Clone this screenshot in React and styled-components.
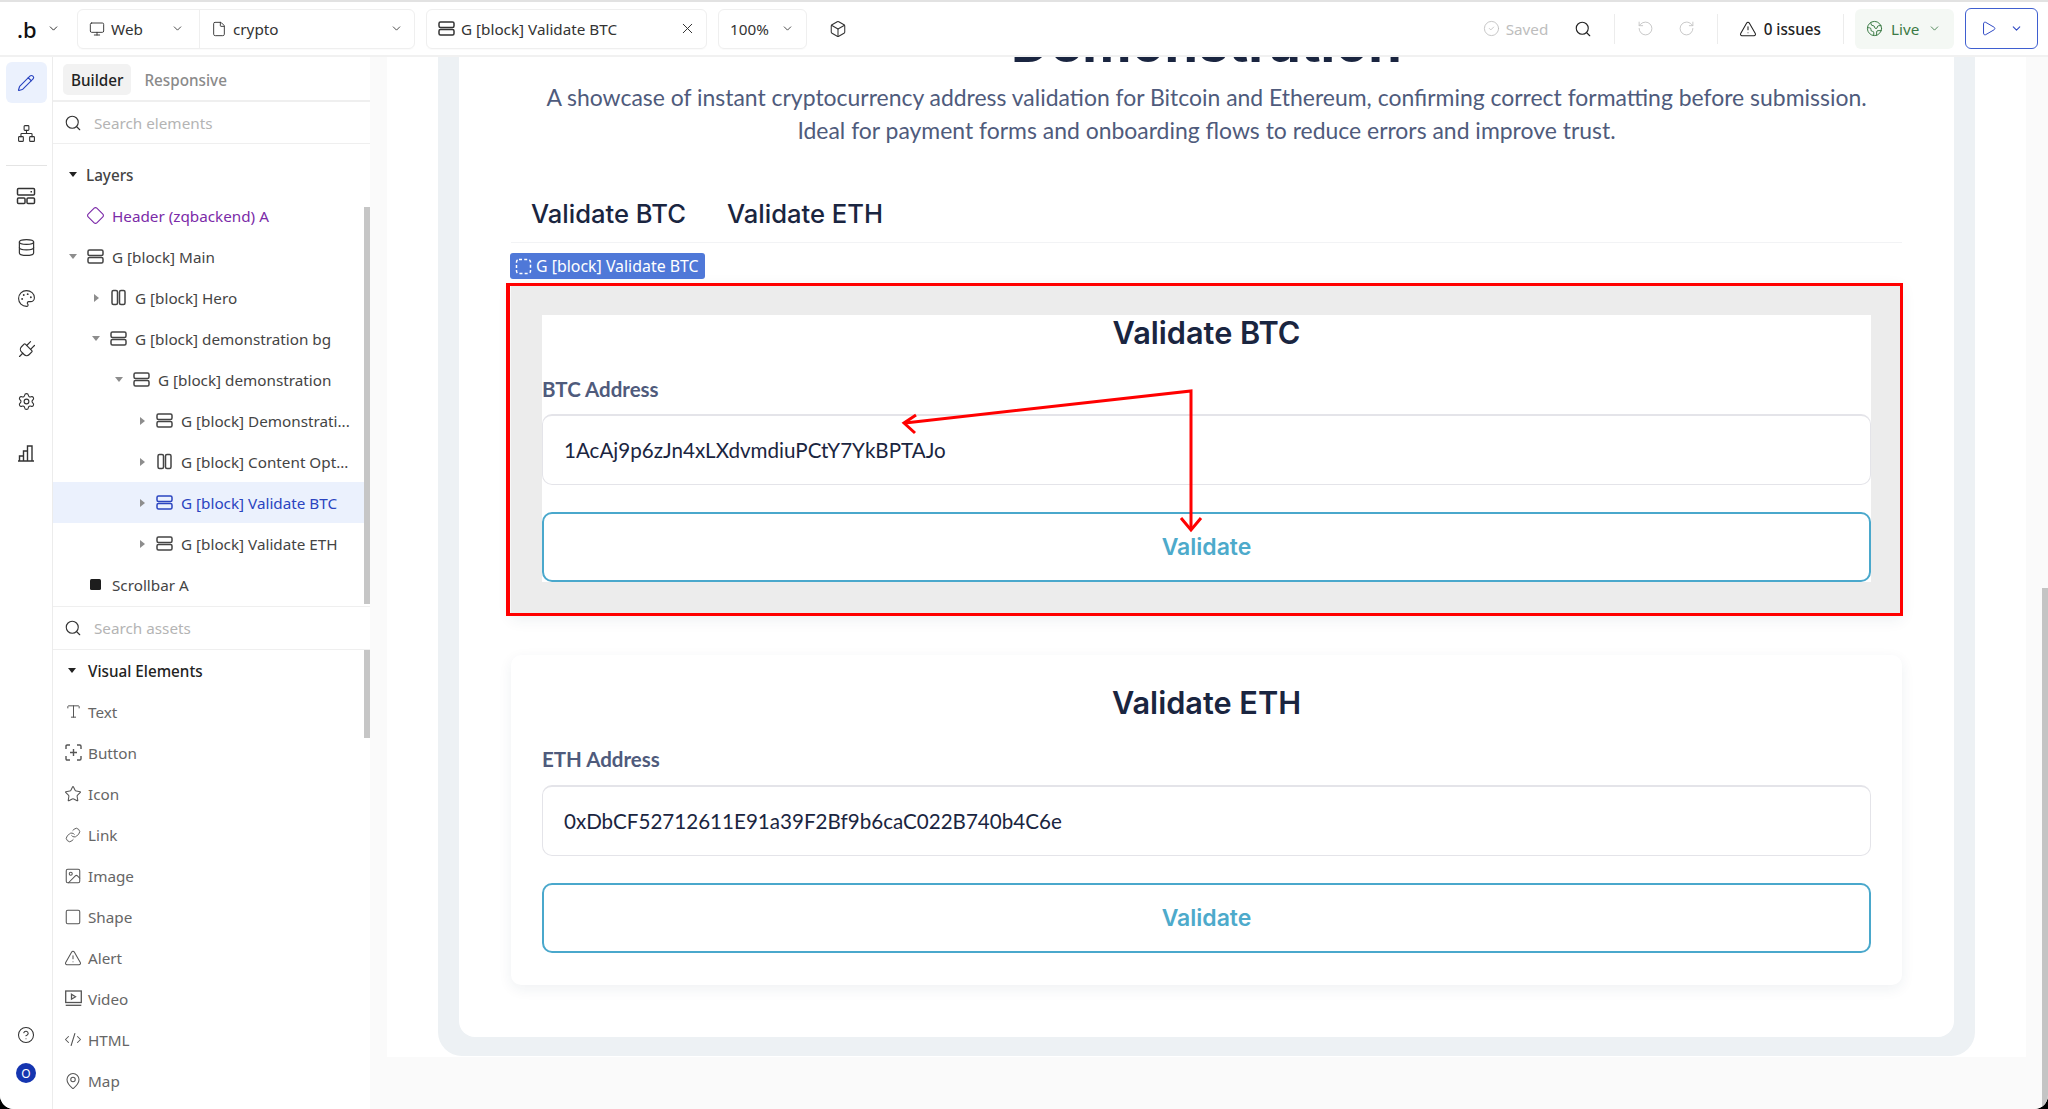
import React from "react";
import styled, { createGlobalStyle } from "styled-components";
import {
  Pencil, Network, Database, Palette, Plug, Settings, CircleHelp, Search, Monitor, File, X, Box,
  CircleCheck, RotateCcw, RotateCw, TriangleAlert, Earth, Play, ChevronDown, Diamond, Type, Star,
  Link, Image, Square, CodeXml, MapPin,
} from "lucide-react";

const GlobalStyle = createGlobalStyle`
    html, body { margin: 0; height: 100%; background: #000; overflow: hidden; }
    #root { height: 100%; }
    * { box-sizing: border-box; }
`;

const Shell = styled.div`
    position: relative;
    height: 100vh;
    display: flex;
    flex-direction: column;
    background: #fff;
    border-radius: 0 0 14px 14px;
    overflow: hidden;
    font-family: "Noto Sans", sans-serif;
    color: #222;
`;

const Toolbar = styled.header`
    height: 57px;
    flex: none;
    display: flex;
    align-items: center;
    border-top: 2px solid #e2e2e2;
    border-bottom: 2px solid #f1f1f1;
    font-size: 15.25px;
    position: relative;
    z-index: 2;
    background: #fff;
`;

const Logo = styled.div`
    width: 77px;
    padding-left: 17px;
    display: flex;
    align-items: center;
    gap: 10px;
    font-size: 22px;
    font-weight: 500;
    color: #111;
`;

const ToolGroup = styled.div`
    height: 40px;
    display: flex;
    align-items: center;
    border: 1px solid #efefef;
    border-radius: 6px;
    margin-right: ${(p) => p.$gap || 11}px;
    box-shadow: 0 1px 1px rgba(0, 0, 0, 0.02);
`;

const ToolCell = styled.div`
    width: ${(p) => p.$width}px;
    height: 100%;
    padding: 0 ${(p) => p.$right || 12}px 0 11px;
    display: flex;
    align-items: center;
    gap: 6px;
    color: #333;
    & + & { border-left: 1px solid #efefef; }
`;

const CellLabel = styled.span`
    flex: 1;
    white-space: nowrap;
`;

const ToolIcon = styled.span`
    display: inline-flex;
    color: ${(p) => p.$color || "#333"};
    margin: ${(p) => p.$margin || 0};
`;

const ToolRight = styled.div`
    margin-left: auto;
    display: flex;
    align-items: center;
`;

const Saved = styled.div`
    display: flex;
    align-items: center;
    gap: 6px;
    color: #bdbdbd;
    width: 91px;
`;

const VLine = styled.span`
    width: 1px;
    height: 30px;
    background: #ececec;
    margin: ${(p) => p.$margin};
`;

const Issues = styled.div`
    display: flex;
    align-items: center;
    gap: 7px;
    font-weight: 500;
    color: #222;
`;

const LiveChip = styled.div`
    width: 99px;
    height: 40px;
    margin-left: 11px;
    padding-left: 11px;
    display: flex;
    align-items: center;
    gap: 8px;
    border-radius: 6px;
    background: #f4f8f4;
    color: #3b7a45;
`;

const RunButton = styled.div`
    width: 73px;
    height: 41px;
    margin: 0 10px 0 11px;
    padding-left: 14px;
    display: flex;
    align-items: center;
    gap: 13px;
    border: 1px solid #3f5fd0;
    border-radius: 6px;
    color: #2f49c4;
`;

const Body = styled.div`
    flex: 1;
    min-height: 0;
    display: flex;
`;

const Rail = styled.nav`
    width: 53px;
    flex: none;
    padding: 5px 5px 0;
    display: flex;
    flex-direction: column;
    align-items: center;
    border-right: 1px solid #ececec;
    background: #fff;
`;

const RailButton = styled.div`
    width: 41px;
    height: 41px;
    flex: none;
    display: flex;
    align-items: center;
    justify-content: center;
    border-radius: 6px;
    margin-bottom: 10.3px;
    background: ${(p) => (p.$active ? "#ebf1fd" : "transparent")};
    color: ${(p) => (p.$active ? "#2a44c0" : "#333")};
    & svg { transform: rotate(${(p) => p.$tilt || 0}deg); }
`;

const RailRule = styled.hr`
    width: 41px;
    height: 1px;
    flex: none;
    margin: 0 0 10px;
    border: 0;
    background: #e4e4e4;
`;

const RailFoot = styled.div`
    margin-top: auto;
    padding-bottom: 26px;
    display: flex;
    flex-direction: column;
    align-items: center;
    gap: 19px;
    color: #333;
`;

const Avatar = styled.div`
    width: 20px;
    height: 20px;
    border-radius: 50%;
    background: #1535b0;
    color: #fff;
    font-size: 12px;
    display: flex;
    align-items: center;
    justify-content: center;
`;

const Panel = styled.aside`
    width: 317px;
    flex: none;
    display: flex;
    flex-direction: column;
    background: #fff;
    font-size: 15.25px;
`;

const PanelTabs = styled.div`
    height: 45px;
    flex: none;
    padding: 7px 0 0 10px;
    display: flex;
    align-items: flex-start;
    gap: 13px;
    border-bottom: 2px solid #efefef;
`;

const PanelTab = styled.div`
    height: 31px;
    padding: 0 ${(p) => (p.$active ? 8 : 0)}px;
    display: flex;
    align-items: center;
    border-radius: 5px;
    font-weight: 500;
    background: ${(p) => (p.$active ? "#f2f2f2" : "transparent")};
    color: ${(p) => (p.$active ? "#222" : "#8a8a8a")};
`;

const SearchRow = styled.div`
    height: ${(p) => p.$height}px;
    flex: none;
    padding-left: 11px;
    display: flex;
    align-items: center;
    gap: 12px;
    border-bottom: 1px solid #efefef;
    color: #b4b4b4;
    & svg { color: #333; }
`;

const TreeArea = styled.div`
    position: relative;
    flex: none;
    height: ${(p) => p.$height}px;
    padding-top: ${(p) => p.$pad || 0}px;
    border-bottom: ${(p) => (p.$ruled ? "1px solid #efefef" : "0")};
    overflow: hidden;
`;

const Thumb = styled.div`
    position: absolute;
    right: 0;
    top: ${(p) => p.$top}px;
    width: 6px;
    height: ${(p) => p.$height}px;
    background: #c6c6c6;
`;

const Row = styled.div`
    height: 41px;
    margin-right: 6px;
    padding-left: ${(p) => 12 + p.$depth * 23}px;
    display: flex;
    align-items: center;
    white-space: nowrap;
    font-weight: ${(p) => (p.$head ? 500 : 400)};
    background: ${(p) => (p.$selected ? "#ebf1fd" : "transparent")};
    color: ${(p) => (p.$selected ? "#2a44c0" : p.$purple ? "#7b2aa8" : "#444")};
`;

const CaretSlot = styled.span`
    width: 16px;
    flex: none;
    display: flex;
    justify-content: center;
`;

const Caret = styled.span`
    width: 0;
    height: 0;
    display: block;
    ${(p) =>
      p.$open
        ? `border-left: 4.5px solid transparent; border-right: 4.5px solid transparent; border-top: 5.5px solid ${p.$dark ? "#222" : "#8d8d8d"};`
        : `border-top: 4.5px solid transparent; border-bottom: 4.5px solid transparent; border-left: 5.5px solid ${p.$dark ? "#222" : "#8d8d8d"};`}
`;

const RowIcon = styled.span`
    width: 23px;
    margin: 0 5px 0 3px;
    flex: none;
    display: flex;
    align-items: center;
    justify-content: center;
`;

const RowHeadText = styled.span`
    margin-left: 5px;
`;

const AssetRow = styled.div`
    height: 41px;
    padding-left: 11px;
    display: flex;
    align-items: center;
    gap: 6px;
    color: #666;
`;

const AssetHead = styled(AssetRow)`
    color: #222;
    font-weight: 500;
    gap: 8px;
    padding-left: 11px;
`;

const AssetIcon = styled.span`
    width: 18px;
    flex: none;
    display: flex;
    justify-content: center;
    color: #555;
`;

const Canvas = styled.main`
    flex: 1;
    min-width: 0;
    padding-right: 6px;
    background: #fafafa;
    overflow: hidden;
`;

const Page = styled.div`
    margin: -43px 16px 0 17px;
    padding: 0 51px 1px;
    background: #fff;
`;

const SectionBg = styled.section`
    padding: 0 21px 19px;
    background: #edf1f4;
    border-radius: 0 0 24px 24px;
`;

const SectionInner = styled.div`
    padding: 0 52px 52px;
    background: #fff;
    border-radius: 0 0 16px 16px;
`;

const Heading = styled.h2`
    margin: 0;
    font: 700 54px/58px Inter, sans-serif;
    color: #1a2540;
    text-align: center;
`;

const Intro = styled.p`
    margin: 9px 0 0;
    font: 400 22.95px/33px Lato, sans-serif;
    color: #4f5b7c;
    text-align: center;
`;

const TabBar = styled.div`
    height: 57px;
    margin-top: 39px;
    padding-left: 20px;
    display: flex;
    gap: 41px;
    border-bottom: 1px solid #f2f3f5;
`;

const TabItem = styled.div`
    height: 56px;
    padding-bottom: 2px;
    display: flex;
    align-items: center;
    font: 500 25.6px Inter, sans-serif;
    color: #1a2540;
`;

const Card = styled.div`
    position: relative;
    margin-top: ${(p) => (p.$highlight ? 40 : 39)}px;
    padding: ${(p) => (p.$highlight ? "32px 31px 34px" : "30px 31px 32px")};
    border-radius: ${(p) => (p.$highlight ? 0 : 10)}px;
    background: ${(p) => (p.$highlight ? "#ececec" : "#fff")};
    box-shadow: 0 4px 14px rgba(30, 50, 90, 0.07);
`;

const RedFrame = styled.div`
    position: absolute;
    inset: 0 -1px 0 -5px;
    border: 3px solid #f00;
    border-left-width: 4px;
`;

const BlockChip = styled.div`
    position: absolute;
    left: -1px;
    top: -30px;
    width: 195px;
    height: 26px;
    padding-left: 5px;
    display: flex;
    align-items: center;
    gap: 4px;
    border-radius: 3px;
    background: #4f78d8;
    color: #fff;
    font: 400 15.9px "Noto Sans", sans-serif;
    white-space: nowrap;
`;

const CardBody = styled.div`
    background: #fff;
`;

const CardTitle = styled.h3`
    margin: 0;
    font: 600 30.7px/36px Inter, sans-serif;
    color: #1a2540;
    text-align: center;
`;

const FieldLabel = styled.div`
    margin: 25px 0 ${(p) => p.$gap}px;
    font: 700 20.5px/26px Lato, sans-serif;
    color: #4f5b7c;
`;

const AddressBox = styled.div`
    height: 71px;
    padding: 0 0 1px 21px;
    display: flex;
    align-items: center;
    border: 1px solid #e4e4e9;
    border-top-width: 2px;
    border-radius: 10px;
    background: #fff;
    font: 400 20.6px Lato, sans-serif;
    color: #1a2540;
`;

const ValidateButton = styled.div`
    height: 70px;
    margin-top: 27px;
    display: flex;
    align-items: center;
    justify-content: center;
    border: 2px solid #4aa8cc;
    border-radius: 10px;
    background: #fff;
    font: 600 23px Inter, sans-serif;
    color: #4daacb;
`;

const PageThumb = styled.div`
    position: absolute;
    right: 0;
    top: 588px;
    bottom: 0;
    width: 6px;
    background: #c4c4c4;
`;

const Annotation = styled.svg`
    position: absolute;
    left: 0;
    top: 0;
    pointer-events: none;
`;

function StackIcon({ color = "currentColor" }) {
  return (
    <svg width="17" height="17" viewBox="0 0 17 17" fill="none" stroke={color} strokeWidth="1.5">
      <rect x="1" y="2" width="15" height="5.5" rx="1.5" />
      <rect x="1" y="9.5" width="15" height="5.5" rx="1.5" />
    </svg>
  );
}

function ColumnsIcon() {
  return (
    <svg width="17" height="17" viewBox="0 0 17 17" fill="none" stroke="currentColor" strokeWidth="1.5">
      <rect x="2" y="1.5" width="5.5" height="14" rx="1.5" />
      <rect x="9.5" y="1.5" width="5.5" height="14" rx="1.5" />
    </svg>
  );
}

function LayoutIcon() {
  return (
    <svg width="20" height="20" viewBox="0 0 20 20" fill="none" stroke="currentColor" strokeWidth="1.5">
      <rect x="1.5" y="2.5" width="17" height="6.5" rx="1" />
      <rect x="1.5" y="12" width="7.5" height="5.5" rx="1" />
      <rect x="11" y="12" width="7.5" height="5.5" rx="1" />
      <path d="M14.5 5.7h1.5" />
    </svg>
  );
}

function ChartIcon() {
  return (
    <svg width="18" height="18" viewBox="0 0 18 18" fill="none" stroke="currentColor" strokeWidth="1.4">
      <path d="M1 17h16M2.5 17v-5h4v5M6.5 17V7h4v10M10.5 17V2h4.500v15" />
    </svg>
  );
}

function SolidSquare() {
  return (
    <svg width="13" height="13" viewBox="0 0 13 13">
      <rect x="1" y="1" width="11" height="11" rx="1.5" fill="#1d1d1d" />
    </svg>
  );
}

function ButtonIcon() {
  return (
    <svg width="17" height="17" viewBox="0 0 17 17" fill="none" stroke="currentColor" strokeWidth="1.4">
      <path d="M1 5V2.200Q1 1 2.200 1H5M12 1h2.800Q16 1 16 2.200V5M16 12v2.800Q16 16 14.800 16H12M5 16H2.200Q1 16 1 14.800V12" />
      <path d="M8.500 5v7M5 8.500h7" />
    </svg>
  );
}

function VideoIcon() {
  return (
    <svg width="17" height="17" viewBox="0 0 17 17" fill="none" stroke="currentColor" strokeWidth="1.3">
      <rect x="0.700" y="1" width="15.600" height="11.500" />
      <path d="M0.700 15.300h15.600" />
      <path d="M6.500 4.200l4 2.500-4 2.500z" />
    </svg>
  );
}

function DashedSquare() {
  return (
    <svg width="17" height="17" viewBox="0 0 17 17" fill="none" stroke="#fff" strokeWidth="1.500" strokeDasharray="3 2.200">
      <rect x="1.500" y="1.500" width="14" height="14" rx="2.500" />
    </svg>
  );
}

const layers = [
  { label: "Header (zqbackend) A", depth: 0, icon: <Diamond size={19} strokeWidth={1.4} />, purple: true },
  { label: "G [block] Main", depth: 0, caret: "open", icon: <StackIcon /> },
  { label: "G [block] Hero", depth: 1, caret: "closed", icon: <ColumnsIcon /> },
  { label: "G [block] demonstration bg", depth: 1, caret: "open", icon: <StackIcon /> },
  { label: "G [block] demonstration", depth: 2, caret: "open", icon: <StackIcon /> },
  { label: "G [block] Demonstrati...", depth: 3, caret: "closed", icon: <StackIcon /> },
  { label: "G [block] Content Opt...", depth: 3, caret: "closed", icon: <ColumnsIcon /> },
  { label: "G [block] Validate BTC", depth: 3, caret: "closed", icon: <StackIcon />, selected: true },
  { label: "G [block] Validate ETH", depth: 3, caret: "closed", icon: <StackIcon /> },
  { label: "Scrollbar A", depth: 0, icon: <SolidSquare /> },
];

const assets = [
  { label: "Text", icon: <Type size={17} strokeWidth={1.4} /> },
  { label: "Button", icon: <ButtonIcon /> },
  { label: "Icon", icon: <Star size={18} strokeWidth={1.4} /> },
  { label: "Link", icon: <Link size={16} strokeWidth={1.4} /> },
  { label: "Image", icon: <Image size={18} strokeWidth={1.4} /> },
  { label: "Shape", icon: <Square size={18} strokeWidth={1.4} /> },
  { label: "Alert", icon: <TriangleAlert size={18} strokeWidth={1.4} /> },
  { label: "Video", icon: <VideoIcon /> },
  { label: "HTML", icon: <CodeXml size={19} strokeWidth={1.4} /> },
  { label: "Map", icon: <MapPin size={18} strokeWidth={1.4} /> },
];

function ValidateCard({ coin, address, gap, highlight }) {
  return (
    <Card $highlight={highlight}>
      <CardBody>
        <CardTitle>Validate {coin}</CardTitle>
        <FieldLabel $gap={gap}>{coin} Address</FieldLabel>
        <AddressBox>{address}</AddressBox>
        <ValidateButton>Validate</ValidateButton>
      </CardBody>
      {highlight && (
        <>
          <RedFrame />
          <BlockChip>
            <DashedSquare />
            G [block] Validate BTC
          </BlockChip>
        </>
      )}
    </Card>
  );
}

function App() {
  return (
    <Shell>
      <GlobalStyle />
      <Toolbar>
        <Logo>
          .b
          <ChevronDown size={13} strokeWidth={1.6} />
        </Logo>
        <ToolGroup>
          <ToolCell $width={121} $right={15}>
            <Monitor size={16} strokeWidth={1.4} />
            <CellLabel>Web</CellLabel>
            <ChevronDown size={13} strokeWidth={1.6} />
          </ToolCell>
          <ToolCell $width={215} $right={11}>
            <File size={16} strokeWidth={1.4} />
            <CellLabel>crypto</CellLabel>
            <ChevronDown size={13} strokeWidth={1.6} />
          </ToolCell>
        </ToolGroup>
        <ToolGroup>
          <ToolCell $width={279} $right={10}>
            <StackIcon />
            <CellLabel>G [block] Validate BTC</CellLabel>
            <X size={17} strokeWidth={1.4} />
          </ToolCell>
        </ToolGroup>
        <ToolGroup>
          <ToolCell $width={87}>
            <CellLabel>100%</CellLabel>
            <ChevronDown size={13} strokeWidth={1.6} />
          </ToolCell>
        </ToolGroup>
        <ToolIcon $margin="0 0 0 11px">
          <Box size={18} strokeWidth={1.4} />
        </ToolIcon>
        <ToolRight>
          <Saved>
            <CircleCheck size={17} strokeWidth={1.2} />
            Saved
          </Saved>
          <Search size={18} strokeWidth={1.5} />
          <VLine $margin="0 22px 0 22px" />
          <ToolIcon $color="#c4c4c4" $margin="0 24px 0 0">
            <RotateCcw size={17} strokeWidth={1.3} />
          </ToolIcon>
          <ToolIcon $color="#c4c4c4">
            <RotateCw size={17} strokeWidth={1.3} />
          </ToolIcon>
          <VLine $margin="0 21px 0 22px" />
          <Issues>
            <TriangleAlert size={18} strokeWidth={1.4} />
            0 issues
          </Issues>
          <VLine $margin="0 0 0 22px" />
          <LiveChip>
            <Earth size={17} strokeWidth={1.4} />
            Live
            <ChevronDown size={13} strokeWidth={1.6} style={{ marginLeft: 1 }} />
          </LiveChip>
          <RunButton>
            <Play size={17} strokeWidth={1.4} />
            <ChevronDown size={13} strokeWidth={2} />
          </RunButton>
        </ToolRight>
      </Toolbar>
      <Body>
        <Rail>
          <RailButton $active>
            <Pencil size={18} strokeWidth={1.5} />
          </RailButton>
          <RailButton>
            <Network size={19} strokeWidth={1.4} />
          </RailButton>
          <RailRule />
          <RailButton>
            <LayoutIcon />
          </RailButton>
          <RailButton>
            <Database size={19} strokeWidth={1.5} />
          </RailButton>
          <RailButton>
            <Palette size={19} strokeWidth={1.4} />
          </RailButton>
          <RailButton $tilt={45}>
            <Plug size={22} strokeWidth={1.3} />
          </RailButton>
          <RailButton>
            <Settings size={19} strokeWidth={1.4} />
          </RailButton>
          <RailButton>
            <ChartIcon />
          </RailButton>
          <RailFoot>
            <CircleHelp size={18} strokeWidth={1.4} />
            <Avatar>O</Avatar>
          </RailFoot>
        </Rail>
        <Panel>
          <PanelTabs>
            <PanelTab $active>Builder</PanelTab>
            <PanelTab>Responsive</PanelTab>
          </PanelTabs>
          <SearchRow $height={42}>
            <Search size={18} strokeWidth={1.5} />
            Search elements
          </SearchRow>
          <TreeArea $height={463} $pad={10} $ruled>
            <Thumb $top={63} $height={397} />
            <Row $depth={0} $head>
              <CaretSlot>
                <Caret $open $dark />
              </CaretSlot>
              <RowHeadText>Layers</RowHeadText>
            </Row>
            {layers.map((item) => (
              <Row key={item.label} $depth={item.depth} $selected={item.selected} $purple={item.purple}>
                <CaretSlot>{item.caret && <Caret $open={item.caret === "open"} />}</CaretSlot>
                <RowIcon>{item.icon}</RowIcon>
                {item.label}
              </Row>
            ))}
          </TreeArea>
          <SearchRow $height={43}>
            <Search size={18} strokeWidth={1.5} />
            Search assets
          </SearchRow>
          <TreeArea $height={450}>
            <Thumb $top={0} $height={88} />
            <AssetHead>
              <CaretSlot>
                <Caret $open $dark />
              </CaretSlot>
              Visual Elements
            </AssetHead>
            {assets.map((item) => (
              <AssetRow key={item.label}>
                <AssetIcon>{item.icon}</AssetIcon>
                {item.label}
              </AssetRow>
            ))}
          </TreeArea>
        </Panel>
        <Canvas>
          <Page>
            <SectionBg>
              <SectionInner>
                <Heading>Demonstration</Heading>
                <Intro>
                  A showcase of instant cryptocurrency address validation for Bitcoin and Ethereum, confirming correct formatting before submission.
                  <br />
                  Ideal for payment forms and onboarding flows to reduce errors and improve trust.
                </Intro>
                <TabBar>
                  <TabItem>Validate BTC</TabItem>
                  <TabItem>Validate ETH</TabItem>
                </TabBar>
                <ValidateCard coin="BTC" address="1AcAj9p6zJn4xLXdvmdiuPCtY7YkBPTAJo" gap={12} highlight />
                <ValidateCard coin="ETH" address="0xDbCF52712611E91a39F2Bf9b6caC022B740b4C6e" gap={13} />
              </SectionInner>
            </SectionBg>
          </Page>
        </Canvas>
      </Body>
      <PageThumb />
      <Annotation width="2048" height="1109" fill="none" stroke="#f00" strokeWidth="3">
        <path d="M905 423L1191 391V530" />
        <path d="M916 415L904 423L915 433" />
        <path d="M1181 518L1191 530L1201 518" />
      </Annotation>
    </Shell>
  );
}

export default App;
